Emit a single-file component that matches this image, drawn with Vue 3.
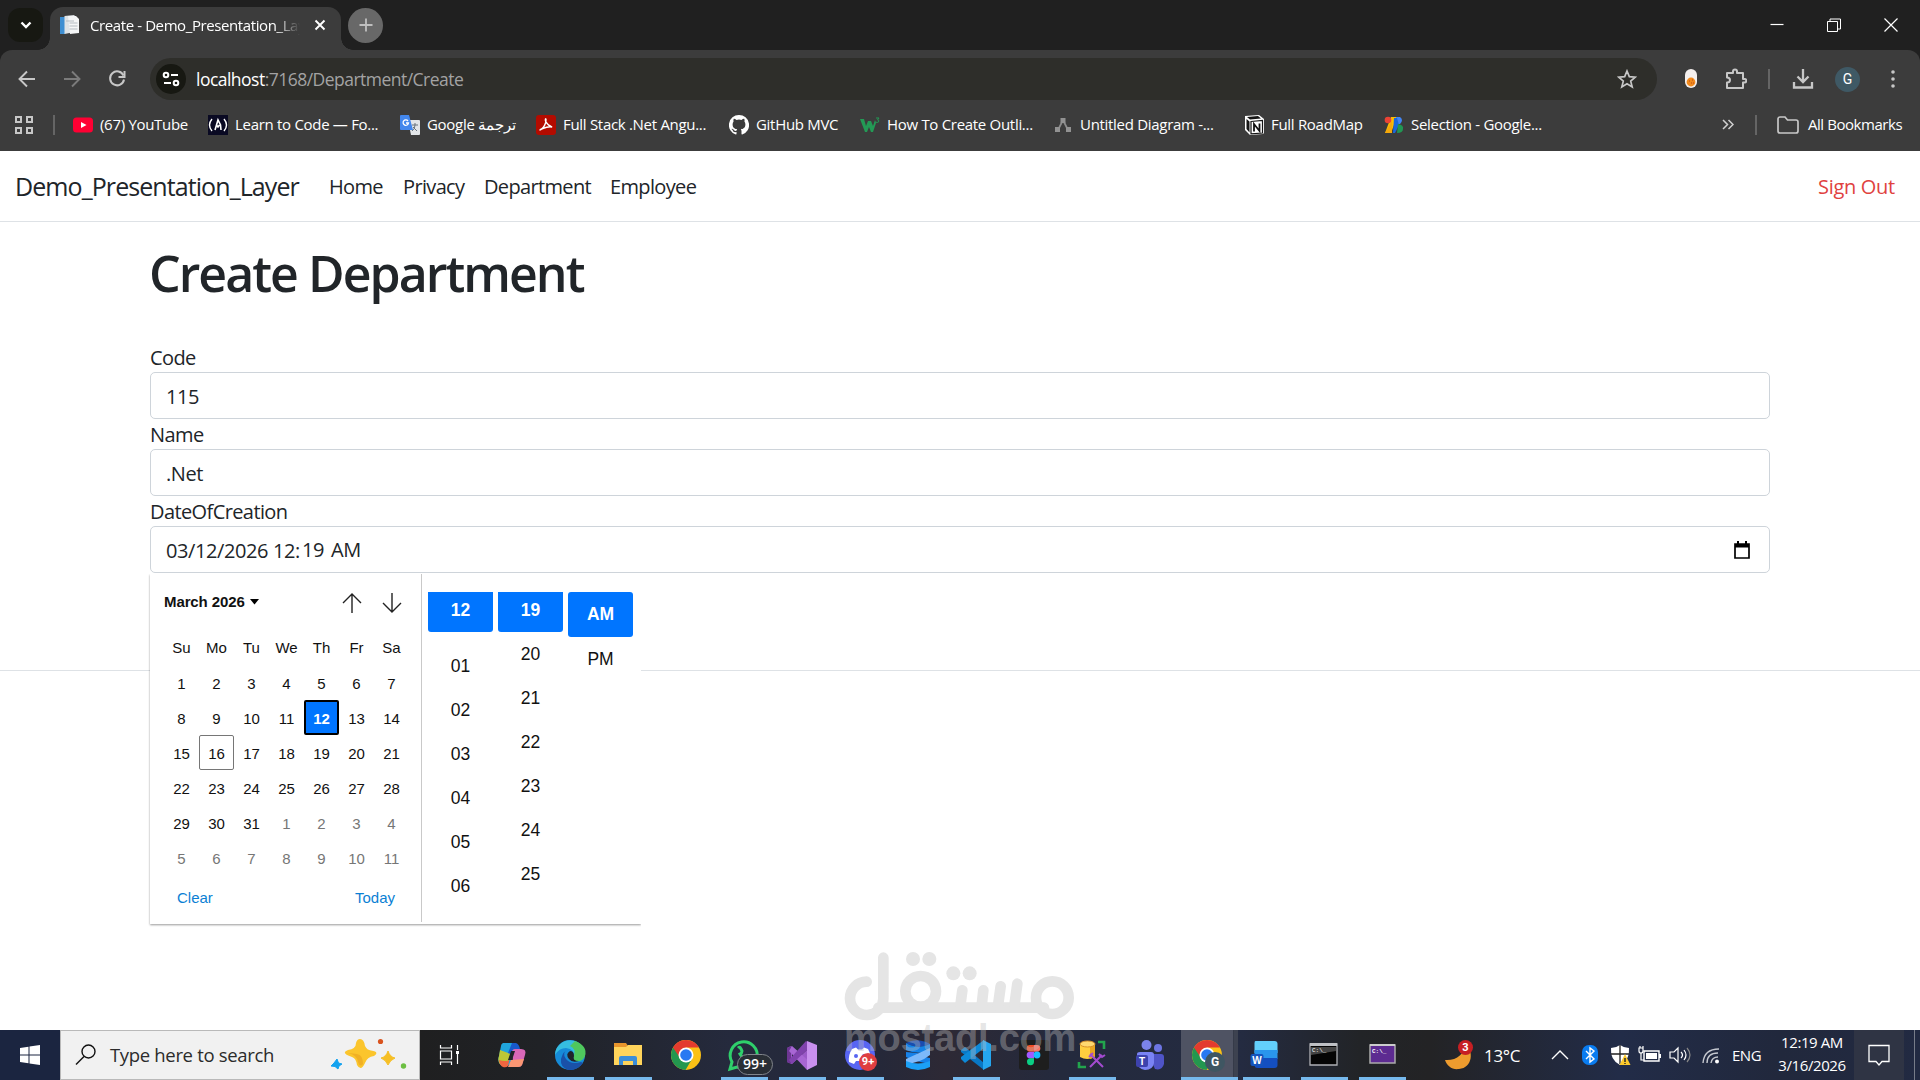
<template>
  <div class="screen">
    <header class="browser">
      <div class="tab-strip">
        <button class="tab-search">
          <svg width="14" height="10" viewBox="0 0 14 10"><path d="M2.500 2.500l4.500 4.500l4.500-4.500" fill="none" stroke="#fff" stroke-width="2.400" /></svg>
        </button>
        <div class="tab">
          <svg class="tab-icon" width="20" height="20" viewBox="0 0 20 20">
            <path d="M0 2h5v17H0z" fill="#3f8fd2" /><path d="M4.500 1l10-1v17l-10 2z" fill="#dfe3e6" />
            <path d="M8 1h8l3 3v14l-9 1z" fill="#f5f6f7" /><path d="M9.500 8h8M9.500 11h8M9.500 14h8M6 6h8" stroke="#b5bcc2" />
          </svg>
          <span class="tab-title">Create - Demo_Presentation_Layer</span>
          <svg width="12" height="12" viewBox="0 0 12 12"><path d="M1.500 1.500l9 9M10.500 1.500l-9 9" stroke="#fff" stroke-width="1.900" /></svg>
        </div>
        <button class="new-tab">
          <svg width="14" height="14" viewBox="0 0 14 14"><path d="M7 .5v13M.5 7h13" stroke="#bfbfbf" stroke-width="1.800" /></svg>
        </button>
        <div class="window-controls">
          <svg width="14" height="14" viewBox="0 0 14 14"><path d="M.5 6.500h13" stroke="#fff" stroke-width="1.200" /></svg>
          <svg width="14" height="14" viewBox="0 0 14 14"><path d="M.5 3.500h10v10h-10zM3 3.500V1h10.500v10H11" fill="none" stroke="#fff" /></svg>
          <svg width="14" height="14" viewBox="0 0 14 14"><path d="M.5.5l13 13M13.500.5l-13 13" stroke="#fff" stroke-width="1.200" /></svg>
        </div>
      </div>

      <div class="toolbar">
        <svg class="nav-icon" viewBox="0 0 20 20"><path d="M18 10H3M10 2.500L2.500 10l7.500 7.500" fill="none" stroke="#c7c7c7" stroke-width="1.900" /></svg>
        <svg class="nav-icon" viewBox="0 0 20 20"><path d="M2 10h15M10 2.500l7.500 7.500l-7.500 7.500" fill="none" stroke="#7b7b7b" stroke-width="1.900" /></svg>
        <svg class="nav-icon" viewBox="0 0 20 20">
          <path d="M16.500 6.500A7 7 0 1 0 17 10.500" fill="none" stroke="#c7c7c7" stroke-width="2" /><path d="M17.500 2v6h-6" fill="none" stroke="#c7c7c7" stroke-width="2" />
        </svg>
        <div class="address">
          <span class="site-info">
            <svg width="18" height="16" viewBox="0 0 18 16">
              <g fill="none" stroke="#fff" stroke-width="2"><circle cx="4" cy="4" r="2.300" /><path d="M9 4h7M2 12h7" /><circle cx="14" cy="12" r="2.300" /></g>
            </svg>
          </span>
          <span class="url"><b>localhost</b>:7168/Department/Create</span>
          <svg class="star" width="20" height="20" viewBox="0 0 20 20">
            <path d="M10 2l2.300 5.600l6 .5l-4.600 4l1.500 5.900l-5.200-3.200L4.800 18l1.500-5.900l-4.600-4l6-.5z" fill="none" stroke="#c7c7c7" stroke-width="1.700" />
          </svg>
        </div>
        <div class="tools">
          <svg width="12" height="20" viewBox="0 0 12 20">
            <rect width="12" height="19" rx="6" fill="#f4efee" /><circle cx="6" cy="13" r="4.400" fill="#f28a1c" /><path d="M4 12h1M7 11h1M6 14h1M8 14h1" stroke="#b9441b" />
          </svg>
          <svg width="22" height="22" viewBox="0 0 22 22">
            <path d="M2 5h6V3.500a2 2 0 0 1 4 0V5h6v6h1.500a1.800 1.800 0 0 1 0 3.600H18V20H2v-5.500c4 0 4-5 0-5z" fill="none" stroke="#c7c7c7" stroke-width="2" stroke-linejoin="round" />
          </svg>
          <i class="bar"></i>
          <svg width="22" height="22" viewBox="0 0 22 22"><path d="M11 1v13M5.500 8.500L11 14l5.500-5.500M2 14v5.500h18V14" fill="none" stroke="#c7c7c7" stroke-width="2.300" /></svg>
          <span class="avatar">G</span>
          <svg width="6" height="20" viewBox="0 0 6 20"><g fill="#c7c7c7"><circle cx="3" cy="3" r="1.800" /><circle cx="3" cy="10" r="1.800" /><circle cx="3" cy="17" r="1.800" /></g></svg>
        </div>
      </div>

      <div class="bookmarks">
        <svg class="apps" width="18" height="18" viewBox="0 0 18 18"><path d="M1 1h5v5H1zM12 1h5v5h-5zM1 12h5v5H1zM12 12h5v5h-5z" fill="none" stroke="#c7c7c7" stroke-width="2" /></svg>
        <i class="bar"></i>
        <div class="bookmark-list">
          <a v-for="item in bookmarks" :key="item.text" class="bookmark" :style="{ width: item.width + 'px' }">
            <svg width="20" height="20" viewBox="0 0 20 20" v-html="item.icon"></svg>
            <span>{{ item.text }}</span>
          </a>
        </div>
        <svg class="more" width="12" height="11" viewBox="0 0 12 11"><path d="M1 1l4.500 4.500L1 10M6.500 1L11 5.500L6.500 10" fill="none" stroke="#d0d0d0" stroke-width="1.500" /></svg>
        <i class="bar"></i>
        <svg class="folder" width="22" height="18" viewBox="0 0 22 18"><path d="M1 15V3a2 2 0 0 1 2-2h5l2.500 3H19a2 2 0 0 1 2 2v9a2 2 0 0 1-2 2H3a2 2 0 0 1-2-2z" fill="none" stroke="#c7c7c7" stroke-width="1.700" /></svg>
        <span class="all">All Bookmarks</span>
      </div>
    </header>

    <main class="page">
      <nav class="navbar">
        <a class="brand">Demo_Presentation_Layer</a>
        <a v-for="link in links" :key="link.text" class="nav-link" :style="{ width: link.width + 'px' }">{{ link.text }}</a>
        <a class="sign-out">Sign Out</a>
      </nav>

      <div class="container">
        <h1>Create Department</h1>
        <label>Code</label>
        <div class="form-control">115</div>
        <label>Name</label>
        <div class="form-control">.Net</div>
        <label>DateOfCreation</label>
        <div class="form-control date">
          <span class="date-part">03/12/2026 12:</span><span class="minute">19</span><span>AM</span>
          <svg class="calendar-icon" width="16" height="18" viewBox="0 0 16 18"><path d="M1 3h14v14H1z" fill="none" stroke="#000" stroke-width="1.700" /><path d="M1 3h14v3.500H1zM3 0h2v3H3zM11 0h2v3h-2z" /></svg>

          <div class="picker">
            <div class="calendar">
              <div class="month">
                <b>March 2026</b>
                <svg class="caret" width="9" height="6" viewBox="0 0 9 6"><path d="M0 0h9L4.500 5.500z" /></svg>
                <svg class="arrow" width="20" height="20" viewBox="0 0 20 20"><path d="M10 20V1M1 10l9-9l9 9" fill="none" stroke="#222" stroke-width="1.400" /></svg>
                <svg class="arrow" width="20" height="20" viewBox="0 0 20 20"><path d="M10 0v19M1 10l9 9l9-9" fill="none" stroke="#222" stroke-width="1.400" /></svg>
              </div>
              <div class="weekdays">
                <span v-for="name in weekdays" :key="name">{{ name }}</span>
              </div>
              <div class="days">
                <span
                  v-for="(day, index) in days"
                  :key="index"
                  :class="{ selected: index === 11, today: index === 15, other: index > 30 }"
                >{{ day }}</span>
              </div>
              <div class="actions"><a>Clear</a><a>Today</a></div>
            </div>
            <div class="times">
              <div class="time-column hours"><span v-for="hour in hours" :key="hour">{{ hour }}</span></div>
              <div class="time-column"><span v-for="minute in minutes" :key="minute">{{ minute }}</span></div>
              <div class="time-column periods"><span>AM</span><span>PM</span></div>
            </div>
          </div>
        </div>
      </div>
      <footer></footer>
    </main>

    <footer class="taskbar">
      <div class="start">
        <svg width="20" height="20" viewBox="0 0 20 20"><path d="M0 3l8.500-1.200v7.700H0zM9.500 1.600L20 0v9.500H9.500zM0 10.500h8.500v7.700L0 17zM9.500 10.500H20V20l-10.500-1.500z" fill="#fff" /></svg>
      </div>
      <div class="search">
        <svg width="22" height="22" viewBox="0 0 22 22"><circle cx="13.500" cy="7.500" r="6.500" fill="none" stroke="#111" stroke-width="1.400" /><path d="M9 12.500L1 20.500" stroke="#111" stroke-width="1.400" /></svg>
        <span>Type here to search</span>
        <svg class="sparkles" width="78" height="32" viewBox="0 0 78 32">
          <path d="M30 1Q34 1 35 8Q37 12 41 12.500Q50 14 44 18Q37 19 35 25Q31 34 27 27Q26 20 22 19Q10 15 18 12Q26 11 26 5Q27 1 30 1z" fill="#fbc52d" />
          <path d="M18 15q9 2 10 9q2 6 5 2q0-9-6-10z" fill="#e9a21f" opacity=".6" />
          <path d="M58 13q2 6 7 7q-5 2-7 7q-2-5-7-7q5-1 7-7z" fill="#f6bf25" stroke="#f6bf25" />
          <path d="M7 21l1.500 4l3.500 1l-3 2l-1 3l-3-2.500l-4-.5l3-3z" fill="#13a2ef" stroke="#13a2ef" />
          <circle cx="50.500" cy="3.500" r="2.600" fill="#d9531e" /><circle cx="73.500" cy="28" r="2.700" fill="#6cbf42" />
        </svg>
      </div>
      <div class="task-view">
        <svg width="22" height="20" viewBox="0 0 22 20"><path d="M1.500 0v3h11V0M1.500 6h11v8h-11zM1.500 20v-3h11v3M18.500 0v5M18.500 9v10" fill="none" stroke="#fff" stroke-width="1.200" /><path d="M17 6h3v3h-3z" fill="#fff" /></svg>
      </div>
      <div class="apps-row">
        <div v-for="app in apps" :key="app.name" class="app" :class="{ running: app.running, active: app.active }">
          <svg width="36" height="36" viewBox="0 0 36 36" v-html="app.icon"></svg>
          <span v-if="app.badge" class="badge" :class="app.name">{{ app.badge }}</span>
        </div>
      </div>
      <div class="tray">
        <div class="weather">
          <svg width="30" height="32" viewBox="0 0 30 32"><path d="M1 21C12 22 21 15 21 5C30 11 29 29 15 30C8 31 3 27 1 21z" fill="#ee9c2e" /></svg>
          <span class="weather-badge">3</span>
        </div>
        <span class="temperature">13°C</span>
        <svg v-for="item in trayIcons" :key="item.name" class="tray-icon" viewBox="0 0 24 24" v-html="item.icon"></svg>
        <span class="language">ENG</span>
        <div class="clock"><span>12:19 AM</span><span>3/16/2026</span></div>
        <div class="notifications">
          <svg width="22" height="22" viewBox="0 0 22 22"><path d="M1 1.500h20v16h-7L11 21l-3-3.500H1z" fill="none" stroke="#fff" stroke-width="1.300" /></svg>
        </div>
        <i class="show-desktop"></i>
      </div>
    </footer>

    <div class="watermark">
      <svg width="232" height="70" viewBox="0 0 696 210">
        <g fill="none" stroke="#e5e5e5" stroke-width="32" stroke-linecap="round">
          <path d="M68 89A50 50 0 1 0 118 137V17M103 167H600" />
          <circle cx="230" cy="118" r="46" /><circle cx="625" cy="137" r="49" />
          <path d="M355 115l-6 46M418 115l-5 46M470 103l-8 58M520 95l-9 66" />
        </g>
        <g fill="#e5e5e5"><circle cx="207" cy="21" r="21" /><circle cx="256" cy="21" r="21" /><circle cx="328" cy="64" r="21" /><circle cx="377" cy="64" r="21" /></g>
      </svg>
      <span>mostaql.com</span>
    </div>
  </div>
</template>

<script setup>
const bookmarks = [
  { text: "(67) YouTube", width: 135, icon: '<rect y="2.500" width="20" height="15" rx="3.500" fill="#ff0033"/><path d="M8 7l5.500 3L8 13z" fill="#fff"/>' },
  { text: "Learn to Code — Fo...", width: 192, icon: '<path d="M0 0h20v20H0z" fill="#0a0a23"/><path d="M4 4q-5 6 0 12M16 4q5 6 0 12" fill="none" stroke="#fff" stroke-width="1.400"/><path d="M7 15l1.500-5L10 5l2.500 5l.5 5M8.500 10l1.500 2l1.500-2" fill="none" stroke="#fff" stroke-width="1.600"/>' },
  { text: "Google ترجمة", width: 136, icon: '<path d="M8 5h11a1 1 0 0 1 1 1v13a1 1 0 0 1-1 1h-8z" fill="#e2e5e8"/><path d="M12 10h6M15 8v2q0 4-3 6M13 12l4 4" stroke="#68737d" fill="none"/><path d="M1 0h8l4 15H1a1 1 0 0 1-1-1V1a1 1 0 0 1 1-1z" fill="#4387ed"/><path d="M8 6A2.700 2.700 0 1 0 8.500 8H6" fill="none" stroke="#fff" stroke-width="1.300"/>' },
  { text: "Full Stack .Net Angu...", width: 193, icon: '<rect width="20" height="20" rx="3" fill="#b30b00"/><path d="M4 15q4-2 5.500-7q1-5 0-4q-1 2 3 6q4 2 3 2q-2-1-10 2q-2 1-1.500 1" fill="none" stroke="#fff" stroke-width="1.400"/>' },
  { text: "GitHub MVC", width: 131, icon: '<path d="M10 0a10 10 0 0 0-3.200 19.500c.5.100.7-.2.7-.5v-1.900c-2.800.6-3.400-1.200-3.400-1.200-.5-1.200-1.100-1.500-1.100-1.500-.9-.6.100-.6.100-.6 1 .1 1.500 1 1.500 1 .9 1.500 2.400 1.100 3 .8.100-.7.300-1.100.6-1.300-2.200-.3-4.600-1.100-4.600-5 0-1.100.4-2 1-2.700-.1-.3-.4-1.300.1-2.700 0 0 .8-.3 2.800 1a9.500 9.500 0 0 1 5 0c1.900-1.300 2.800-1 2.800-1 .5 1.400.2 2.400.1 2.700.6.700 1 1.600 1 2.700 0 3.900-2.400 4.700-4.600 5 .4.300.7.900.7 1.900V19c0 .3.200.6.700.5A10 10 0 0 0 10 0z" fill="#fff"/>' },
  { text: "How To Create Outli...", width: 193, icon: '<path d="M0 4h4l2 7l2-5h3l2 5l2-6l1 3l-3 9h-2l-2-5l-2 5H5z" fill="#239a55"/><path d="M16 3h3l-1.500 2q2 0 1 2q-1 1-3 0" fill="none" stroke="#239a55"/>' },
  { text: "Untitled Diagram -...", width: 191, icon: '<path d="M10 5L5 15M10 5l5 10" stroke="#8c8c8c" stroke-width="1.700"/><path d="M7.500 3h5v5h-5zM2 12h5v5H2zM13 12h5v5h-5z" fill="#929292"/>' },
  { text: "Full RoadMap", width: 140, icon: '<path d="M1 1l14-1l5 4v14l-1 1l-13 1l-5-5z" fill="#fff"/><path d="M3 2l11-1l3 2.500L6 4.500zM2.500 4l3 2.500v11L2.500 14z" fill="#151515"/><path d="M7 6.500l11.500-1V18L7 18.800z" fill="#fff" stroke="#151515" stroke-width="1.200"/><path d="M10 16.500V9l5.500 7V8.500" fill="none" stroke="#111" stroke-width="1.800"/>' },
  { text: "Selection - Google...", width: 180, icon: '<path d="M7 2h6L7 18H1z" fill="#fbbc04"/><circle cx="4" cy="5" r="3.300" fill="#ea4335"/><path d="M12 2h4q4 3 0 7h-4z" fill="#4285f4"/><path d="M10 3h3l2 7l-4 8H9z" fill="#1a68db"/><path d="M8 6v12H1z" fill="#f5a80b"/><path d="M14 9q6 1 5 5q0 4-6 4z" fill="#219653"/>' },
];

const links = [
  { text: "Home", width: 74 },
  { text: "Privacy", width: 81 },
  { text: "Department", width: 126 },
  { text: "Employee", width: 111 },
];

const weekdays = ["Su", "Mo", "Tu", "We", "Th", "Fr", "Sa"];
const days = Array.from({ length: 42 }, (_, i) => (i < 31 ? i + 1 : i - 30));
const hours = ["12", "01", "02", "03", "04", "05", "06"];
const minutes = ["19", "20", "21", "22", "23", "24", "25"];

const chrome =
  '<circle cx="18" cy="18" r="15" fill="#fbc116"/><path d="M18 18L5 10.500A15 15 0 0 0 17.500 33L24 22z" fill="#23974f"/><path d="M5 10.500A15 15 0 0 1 31 10.500H18L12 21z" fill="#e33b2e"/><circle cx="18" cy="18" r="7.500" fill="#fff"/><circle cx="18" cy="18" r="5.800" fill="#2979f2"/>';

const apps = [
  { name: "copilot", icon: '<path d="M9 6h10q3 0 2 4l-4 14q-1 5-5 5l-5-1q-4-3-2-9L7 9q0-2 2-3z" fill="#20a5dd"/><path d="M6 13l11 4l-4 10q-3 2-6 1q-4-3-2-9z" fill="#bdc735"/><path d="M18 12h9q6 0 4 6l-3 10q-1 2-4 2H14q4-1 5-5z" fill="#d867b8"/><path d="M17 23l13-1l-2 6q-1 2-4 2H14z" fill="#fa9673"/><path d="M18 6h4q3 1 4 6h-5q-3 0-4 5l-3-1z" fill="#1859cc"/><path d="M5 23q3 1 6 1h2q2 0 3-3l-2 8q-2 2-5 1q-3-1-4-7z" fill="#f06540"/><path d="M17 14h4l-3 9h-4z" fill="#20242a"/>' },
  { name: "edge", running: true, icon: '<circle cx="18" cy="18" r="15" fill="#168bd8"/><path d="M3 18A15 15 0 0 1 32 13Q35 22 27 24Q21 24 22 20Q23 12 14 11Q7 11 3 18z" fill="#36bde0"/><path d="M23 4Q36 9 33 19Q31 25 24 24Q20 22 22 19Q24 11 18 9z" fill="#4fc85d"/><path d="M17 12Q9 15 14 22Q19 28 29 25L31 26Q25 34 16 33Q8 30 9 22Q11 14 17 12z" fill="#1a51a8"/><path d="M18 14q-5 3-1 8q3 4 10 2q-7 0-5-5q0-5-4-5z" fill="#20232a"/>' },
  { name: "explorer", running: true, icon: '<path d="M4 6h12l2 3h12v18H4z" fill="#e8952c"/><path d="M4 10h12l2-2h14v20H4z" fill="#ffd45b"/><path d="M9 28v-7q0-2 2-2h14q2 0 2 2v7h-4v-4H13v4z" fill="#3b8dd8"/>' },
  { name: "chrome", icon: chrome },
  { name: "whatsapp", running: true, badge: "99+", icon: '<path d="M4 32l2-7a13.500 13.500 0 1 1 5 5z" fill="none" stroke="#2fcf6b" stroke-width="3"/><path d="M12 11q2-2 3 1l1 2q0 2-2 3q2 4 6 6" fill="none" stroke="#2fcf6b" stroke-width="3"/>' },
  { name: "studio", running: true, icon: '<path d="M3 11l4-2l19 17V10L8 27l-5-2z" fill="#9b59c8"/><path d="M3 11l4-2v18l-4-2z" fill="#6d3693"/><path d="M8 14l4 4l-4 4z" fill="#25293a"/><path d="M8 9l18 16v5l-3 3L5 14z" fill="#a866d4"/><path d="M8 27L25 11V6l-3-2L5 23z" fill="#8042ad"/><path d="M23 4l10 4v20l-10 5z" fill="#c990ef"/>' },
  { name: "discord", running: true, badge: "9+", icon: '<circle cx="18" cy="18" r="15" fill="#5865f2"/><path d="M10 12l4-1.500l2 2h4l2-2l4 1.500q4 7 3 13l-5 2l-2-3h-8l-2 3l-5-2q-1-7 3-13z" fill="#fff"/><circle cx="14" cy="19" r="2" fill="#5865f2"/><circle cx="22" cy="19" r="2" fill="#5865f2"/>' },
  { name: "ribbon", icon: '<path d="M6 6q11-6 24 1q-12 6-24-1z" fill="#194cb0"/><path d="M6 6v7q11 5 24 1V7q-12 6-24-1z" fill="#1583e8"/><path d="M6 15v5q8 4 24 7v-6q-8-1-13-5z" fill="#1681e8"/><path d="M6 27v-5L30 11v7q-10 8-24 9z" fill="#7db9fa"/><path d="M6 24q12 5 24 0v6q-12 6-24 0z" fill="#1ba0f6"/>' },
  { name: "vscode", running: true, icon: '<path d="M3 13l4-3l19 16v7L3 15z" fill="#0878c6"/><path d="M3 22l4 4l19-15V3L3 20z" fill="#0d89d8"/><path d="M25 3l8 4v22l-8 4z" fill="#25a6ef"/>' },
  { name: "figma", icon: '<rect x="3" y="3" width="30" height="30" rx="3" fill="#1e1e1e"/><path d="M18 8h-4a3.300 3.300 0 0 0 0 6.700h4z" fill="#f04e25"/><path d="M18 8h3a3.300 3.300 0 0 1 0 6.700h-3z" fill="#ff7262"/><path d="M18 14.700h-4a3.300 3.300 0 0 0 0 6.700h4z" fill="#a259ff"/><circle cx="21" cy="18" r="3.400" fill="#1abcfe"/><path d="M18 21.300h-4a3.500 3.500 0 1 0 4 3.500z" fill="#0acf83"/>' },
  { name: "ssms", running: true, icon: '<path d="M6 7v13q7 4 15 0V7z" fill="#ffcf3f"/><path d="M16 9v13l5-2V7z" fill="#eaa620"/><ellipse cx="13.500" cy="7" rx="7.500" ry="3" fill="#ffd970" stroke="#d9912a"/><path d="M24 5h6v7M5 25v5h7" fill="none" stroke="#22a54d" stroke-width="2.600"/><path d="M16 17l13 13M28 18L16 30M25 17l3 3l3-2M15 20l4-4" fill="none" stroke="#a34bd0" stroke-width="2"/>' },
  { name: "teams", icon: '<g transform="translate(-4 0)"><circle cx="18.500" cy="8" r="5" fill="#7b83eb"/><circle cx="30" cy="11" r="4" fill="#6d75e3"/><path d="M20 17h13q3 0 3 3v7q-2 7-9 5z" fill="#4f54c7"/><path d="M9 17q0-2 3-2h11q3 0 3 3v8q-1 7-9 7q-8-1-8-9z" fill="#7a83f4"/><rect x="8" y="18" width="12" height="12" rx="2" fill="#3d42ad"/><text x="14" y="28" text-anchor="middle" font-family="Liberation Sans" font-size="10" font-weight="bold" fill="#fff">T</text></g>' },
  { name: "profile", running: true, active: true, badge: "G", icon: chrome },
  { name: "word", running: true, icon: '<g transform="translate(-3.500 0)"><path d="M11 4h19q3 0 3 3v9H10V6q0-2 1-2z" fill="#63d0fb"/><path d="M10 13h23v9H10z" fill="#2a96ec"/><path d="M10 21h23v7q0 3-3 3H13q-3 0-3-3z" fill="#144fc0"/><rect x="6" y="17" width="13" height="12" rx="2" fill="#1554bd"/><text x="12.500" y="27" text-anchor="middle" font-family="Liberation Sans" font-size="10" font-weight="bold" fill="#fff">W</text></g>' },
  { name: "cmd", running: true, icon: '<g transform="translate(-1 0)"><path d="M5 7h27v21H5z" fill="#050505" stroke="#aeb0b5" stroke-width="1.300"/><path d="M5 6h27v3H5z" fill="#bfc1c5"/><path d="M6 10h25v4L6 18z" fill="#444"/><text x="7" y="15" font-family="Liberation Mono" font-size="6" fill="#fff">C:\\_</text></g>' },
  { name: "terminal", running: true, icon: '<path d="M6 8h25v18H6z" fill="#5d2b91" stroke="#aaa" stroke-width="1.500"/><path d="M6 8h25" stroke="#ccc" stroke-width="2"/><text x="8" y="16" font-family="Liberation Mono" font-size="6" font-weight="bold" fill="#fff">C:\\_</text>' },
];

const trayIcons = [
  { name: "chevron", icon: '<path d="M4 16l8-8l8 8" fill="none" stroke="#fff" stroke-width="1.400"/>' },
  { name: "bluetooth", icon: '<rect x="4" y="2" width="16" height="20" rx="7" fill="#0a7cf0"/><path d="M8 8l8 8l-4 3V5l4 3l-8 8" fill="none" stroke="#fff" stroke-width="1.400"/>' },
  { name: "shield", icon: '<path d="M12 2q4 3 9 3q1 12-9 17Q2 17 3 5q5 0 9-3z" fill="#fff"/><path d="M12 2v19M3 11h18" stroke="#222" stroke-width="1.300"/><path d="M17 11l5.500 11h-11z" fill="#fbc92c"/><path d="M17 15v4M17 20v1" stroke="#222" stroke-width="1.400"/>' },
  { name: "battery", icon: '<path d="M6 8h15v10H6z" fill="none" stroke="#fff" stroke-width="1.400"/><path d="M8 10h11v6H8zM21 11h2v4h-2z" fill="#fff"/><path d="M1 5v3q0 2 2 2t2-2V5zM2 3v2M5 3v2M3 10v7h3" fill="none" stroke="#fff" stroke-width="1.200"/>' },
  { name: "volume", icon: '<path d="M2 9h4l4-4v14l-4-4H2z" fill="none" stroke="#fff" stroke-width="1.200"/><path d="M13 9q3 3 0 6M16 7q4 5 0 10" fill="none" stroke="#fff" stroke-width="1.200"/><path d="M19 5q6 7 0 14" fill="none" stroke="#888" stroke-width="1.200"/>' },
  { name: "wifi", icon: '<g transform="translate(1 0)"><g fill="none" stroke="#c5c8cf" stroke-width="1.400"><path d="M4 20Q5 6 20 6M8 20Q8 10 19 10M12 20Q13 14 19 14"/></g><circle cx="18" cy="18.500" r="2" fill="#fff"/></g>' },
];
</script>

<style>
body {
  margin: 0;
  overflow: hidden;
}
</style>

<style scoped>
.screen {
  position: relative;
  width: 1920px;
  height: 1080px;
  overflow: hidden;
  display: flex;
  flex-direction: column;
  background: #fff;
  font-family: "Segoe UI", "Open Sans", "Noto Sans", sans-serif;
  color: #212529;
  white-space: nowrap;
}

.screen * {
  box-sizing: border-box;
}

svg {
  display: block;
  flex: none;
}

button {
  border: 0;
  padding: 0;
  display: flex;
  align-items: center;
  justify-content: center;
}

.browser {
  height: 151px;
  flex: none;
  background: #202020;
  color: #fff;
}

.tab-strip {
  height: 50px;
  display: flex;
  align-items: center;
  padding-left: 8px;
}

.tab-search {
  width: 35px;
  height: 34px;
  border-radius: 12px;
  background: #171812;
}

.tab {
  position: relative;
  width: 291px;
  height: 43px;
  margin: 7px 0 0 7px;
  padding: 0 15px 7px 10px;
  display: flex;
  align-items: center;
  background: #3c3c3c;
  border-radius: 13px 13px 0 0;
}

.tab::before,
.tab::after {
  content: "";
  position: absolute;
  bottom: 0;
  width: 12px;
  height: 12px;
}

.tab::before {
  left: -12px;
  background: radial-gradient(circle at 0 0, transparent 11.5px, #3c3c3c 12px);
}

.tab::after {
  right: -12px;
  background: radial-gradient(circle at 100% 0, transparent 11.5px, #3c3c3c 12px);
}

.tab-title {
  width: 210px;
  margin: 0 14px 0 10px;
  overflow: hidden;
  font-size: 15px;
  letter-spacing: -0.4px;
  mask-image: linear-gradient(90deg, #000 88%, transparent);
}

.new-tab {
  width: 35px;
  height: 35px;
  margin-left: 7px;
  border-radius: 50%;
  background: #686868;
}

.window-controls {
  margin-left: auto;
  padding-right: 22px;
  display: flex;
  gap: 43px;
}

.toolbar {
  height: 58px;
  padding: 0 24px 0 17px;
  display: flex;
  align-items: center;
  background: #3c3c3c;
  border-radius: 12px 12px 0 0;
}

.nav-icon {
  width: 20px;
  height: 20px;
  margin-right: 25px;
}

.address {
  width: 1507px;
  height: 42px;
  padding: 0 20px 0 6px;
  margin-left: -2px;
  display: flex;
  align-items: center;
  border-radius: 21px;
  background: #2e2e2a;
}

.site-info {
  width: 30px;
  height: 30px;
  display: flex;
  align-items: center;
  justify-content: center;
  border-radius: 50%;
  background: #171812;
}

.url {
  margin-left: 10px;
  font-size: 17.5px;
  letter-spacing: -0.52px;
  color: #a3a3a3;
}

.url b {
  font-weight: 400;
  color: #fff;
}

.star {
  margin-left: auto;
}

.tools {
  flex: 1;
  margin-left: 28px;
  display: flex;
  align-items: center;
}

.bar {
  width: 2px;
  height: 20px;
  background: #656565;
}

.tools .bar {
  margin: 0 22px 0 21px;
}

.tools svg:nth-child(2) {
  margin-left: 28px;
}

.avatar {
  width: 25px;
  height: 25px;
  margin: 0 auto 0 21px;
  border-radius: 50%;
  background: #3f5965;
  font: 14px/25px Roboto, sans-serif;
  text-align: center;
}

.bookmarks {
  height: 43px;
  padding: 0 0 10px 15px;
  display: flex;
  align-items: center;
  background: #3c3c3c;
  font-size: 15px;
  letter-spacing: -0.3px;
}

.bookmarks span {
  padding-bottom: 2px;
}

.apps {
  margin-right: 20px;
}

.bookmark-list {
  width: 1667px;
  flex: none;
  padding-left: 18px;
  display: flex;
}

.bookmark {
  flex: none;
  display: flex;
  align-items: center;
  gap: 7px;
}

.more {
  margin-right: 21px;
}

.folder {
  margin: 0 9px 0 20px;
}

.all {
  letter-spacing: -0.45px;
}

.page {
  height: 879px;
  flex: none;
}

.navbar {
  height: 71px;
  padding: 0 15px;
  display: flex;
  align-items: center;
  border-bottom: 1px solid #dee2e6;
  font-size: 20px;
  letter-spacing: -0.65px;
}

.brand {
  width: 314px;
  font-size: 25px;
  letter-spacing: -0.92px;
}

.sign-out {
  width: 87px;
  margin-left: auto;
  color: #e0423f;
  letter-spacing: -0.3px;
}

.container {
  padding: 21px 150px 0;
}

h1 {
  margin: 0 0 39px -1px;
  font-size: 50px;
  font-weight: 600;
  line-height: 60px;
  letter-spacing: -1.95px;
}

label {
  display: block;
  height: 30px;
  font-size: 20px;
  line-height: 32px;
  letter-spacing: -0.6px;
}

.form-control {
  height: 47px;
  padding: 0 15px;
  border: 1px solid #ced4da;
  border-radius: 5px;
  font-size: 20px;
  line-height: 48px;
  letter-spacing: -0.4px;
}

.date {
  position: relative;
  display: flex;
}

.date-part {
  width: 136px;
}

.minute {
  width: 29px;
}

.minute,
.minute + span {
  line-height: 46px;
}

.calendar-icon {
  margin: 14px 4px 0 auto;
}

.picker {
  position: absolute;
  top: 47px;
  left: -1px;
  width: 491px;
  height: 350px;
  display: flex;
  background: #fff;
  color: #111;
  box-shadow: 0 1px 2px rgba(0, 0, 0, 0.4);
  font-family: "Liberation Sans", Arial, sans-serif;
  font-size: 15px;
  letter-spacing: 0;
  clip-path: inset(0 0 -4px -2px);
}

.calendar {
  width: 272px;
  height: 348px;
  padding: 0 0 0 14px;
  border-right: 1px solid #c9c9c9;
  line-height: 35px;
}

.month {
  height: 56px;
  display: flex;
  align-items: center;
  font-size: 15px;
}

.month b {
  padding-bottom: 1px;
  letter-spacing: -0.1px;
}

.arrow {
  margin-top: 1px;
}

.caret {
  margin: 0 83px 0 5px;
}

.arrow + .arrow {
  margin-left: 20px;
}

.weekdays,
.days {
  width: 245px;
  display: grid;
  grid-template-columns: repeat(7, 35px);
  text-align: center;
}

.days span {
  height: 35px;
  line-height: 37px;
}

.days .selected {
  border: 2px solid #000;
  border-radius: 2px;
  background: #0075ff;
  color: #fff;
  font-weight: 700;
  line-height: 33px;
}

.days .today {
  border: 1px solid #767676;
  border-radius: 2px;
  line-height: 35px;
}

.days .other {
  color: #767676;
}

.actions {
  width: 245px;
  padding: 5px 14px 0 13px;
  display: flex;
  justify-content: space-between;
  color: #0b7fd4;
}

.times {
  padding: 18px 0 0 6px;
  display: flex;
  gap: 5px;
  font-size: 17.5px;
}

.time-column {
  width: 65px;
  display: flex;
  flex-direction: column;
  text-align: center;
}

.time-column span {
  height: 44px;
  line-height: 44px;
}

.time-column span:first-child {
  height: 40px;
  border-radius: 0 0 3px 3px;
  background: #0075ff;
  color: #fff;
  font-weight: 700;
  line-height: 36px;
}

.hours span:first-child {
  margin-bottom: 12px;
}

.periods span:first-child {
  height: 45px;
  border-radius: 3px;
  line-height: 45px;
}

.page > footer {
  margin-top: 97px;
  border-top: 1px solid #dee2e6;
}

.taskbar {
  height: 50px;
  flex: none;
  display: flex;
  color: #fff;
  background: linear-gradient(90deg, #1b2540 0, #1b2540 60px, #1f1f20 420px, #202226 540px, #252a3d 730px, #252839 880px, #2d2935 945px, #242a3d 1060px, #242b41 1240px, #222427 1360px, #232325 1430px, #222c48 1620px, #21283c 1780px, #222a42 1920px);
}

.start {
  width: 60px;
  display: flex;
  align-items: center;
  justify-content: center;
}

.search {
  width: 360px;
  padding-left: 14px;
  display: flex;
  align-items: center;
  border: 1px solid #b9b9b9;
  background: #f1f1f1;
  color: #2b2b2b;
  font-size: 18.5px;
  letter-spacing: -0.33px;
}

.search span {
  margin-left: 13px;
  padding-bottom: 2px;
}

.sparkles {
  margin: 0 11px 2px auto;
}

.task-view {
  width: 63px;
  padding-left: 19px;
  display: flex;
  align-items: center;
}

.apps-row {
  display: flex;
}

.app {
  position: relative;
  width: 58px;
  display: flex;
  align-items: center;
  justify-content: center;
}

.running {
  background: linear-gradient(#76b9ed, #76b9ed) center bottom / 47px 3px no-repeat;
}

.active {
  width: 57px;
  margin: 0 -1px 0 2px;
  padding-right: 5px;
  background: linear-gradient(#76b9ed, #76b9ed) left bottom / 57px 3px no-repeat, linear-gradient(90deg, #4f5363 52px, #2e3342 52px, #3d4250 53px);
}

.badge {
  position: absolute;
  border-radius: 12px;
  text-align: center;
}

.badge.whatsapp {
  left: 22px;
  top: 24px;
  width: 36px;
  height: 21px;
  border: 1px solid #81858b;
  background: #292e35;
  font-size: 14px;
  font-weight: 600;
  line-height: 18px;
}

.badge.discord {
  left: 28px;
  top: 23px;
  width: 18px;
  height: 18px;
  background: #df3e41;
  font: bold 11px/18px Roboto, sans-serif;
}

.badge.profile {
  left: 24px;
  top: 22px;
  width: 20px;
  height: 20px;
  background: #3f5662;
  font: bold 12px/20px Roboto, sans-serif;
}

.tray {
  flex: 1;
  padding-left: 33px;
  display: flex;
  align-items: center;
}

.weather {
  position: relative;
}

.weather-badge {
  position: absolute;
  left: 14px;
  top: 1px;
  width: 15px;
  height: 15px;
  border-radius: 50%;
  background: #c71f23;
  font: bold 11px/15px Roboto, sans-serif;
  text-align: center;
}

.temperature {
  width: 64px;
  margin-left: 10px;
  font-size: 17px;
  letter-spacing: -0.3px;
}

.tray-icon {
  width: 24px;
  height: 24px;
  flex: none;
  margin-right: 6px;
}

.language {
  width: 34px;
  flex: none;
  margin-left: 4px;
  font-size: 15px;
  letter-spacing: -0.5px;
}

.clock {
  width: 86px;
  height: 48px;
  flex: none;
  margin: 0 -3px 0 3px;
  display: flex;
  flex-direction: column;
  text-align: center;
  font-size: 15px;
  line-height: 23px;
  letter-spacing: -0.4px;
}

.notifications {
  width: 50px;
  height: 50px;
  flex: none;
  margin-left: auto;
  display: flex;
  align-items: center;
  justify-content: center;
  background: #2f3444;
}

.show-desktop {
  width: 1px;
  height: 50px;
  margin: 0 5px 0 10px;
  background: #777c88;
}

.watermark {
  position: absolute;
  left: 844px;
  top: 952px;
  width: 232px;
  height: 110px;
}

.watermark span {
  position: absolute;
  left: 0;
  top: 64px;
  color: rgba(190, 190, 190, 0.4);
  font: bold 38px/44px "Liberation Sans", Arial, sans-serif;
  letter-spacing: -0.2px;
}
</style>
